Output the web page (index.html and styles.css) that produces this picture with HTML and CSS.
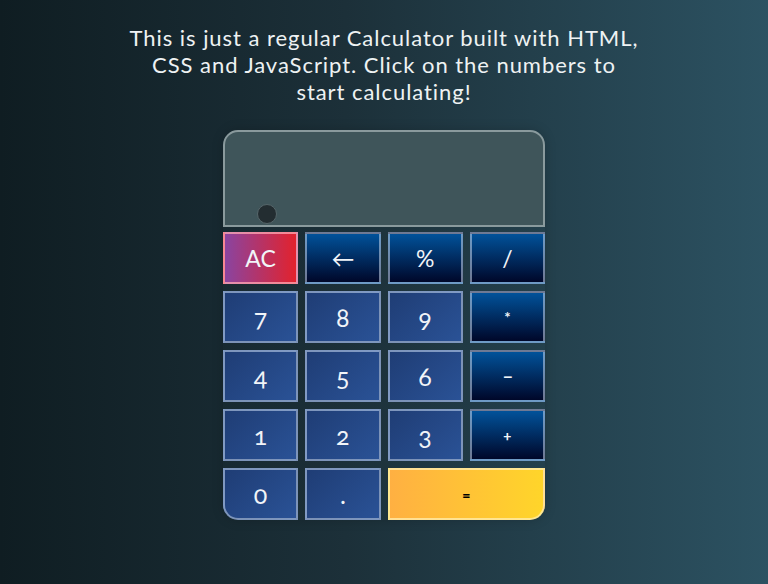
FILE: index.html
```
<!DOCTYPE html>
<html>
<head>
<meta charset="utf-8">
<link rel="stylesheet" href="styles.css">
</head>
<body>
<main class="page">
  <p class="intro">This is just a regular Calculator built with HTML, CSS and JavaScript. Click on the numbers to start calculating!</p>
  <div class="calc">
    <div class="display"><span class="dot"></span></div>
    <div class="keys">
      <button class="key clear">AC</button>
      <button class="key op">&larr;</button>
      <button class="key op">%</button>
      <button class="key op">/</button>
      <button class="key num">7</button>
      <button class="key num">8</button>
      <button class="key num">9</button>
      <button class="key op small">*</button>
      <button class="key num">4</button>
      <button class="key num">5</button>
      <button class="key num">6</button>
      <button class="key op small"><span class="wide">-</span></button>
      <button class="key num">1</button>
      <button class="key num">2</button>
      <button class="key num">3</button>
      <button class="key op small">+</button>
      <button class="key num zero">0</button>
      <button class="key num">.</button>
      <button class="key equals">=</button>
    </div>
  </div>
</main>
</body>
</html>
```
FILE: styles.css
```
html, body {
  margin: 0;
  height: 100%;
}
body {
  background: linear-gradient(90deg, #0f1d22 0%, #1c3039 45%, #2c5262 100%);
  font-family: Lato, "Open Sans", sans-serif;
  color: #eef2f3;
}
.page {
  display: flex;
  flex-direction: column;
  align-items: center;
  padding-top: 24px;
}
.intro {
  margin: 0;
  width: 516px;
  text-align: center;
  font-size: 22px;
  line-height: 27px;
  letter-spacing: 0.95px;
  font-variant-numeric: oldstyle-nums;
}
.calc {
  margin-top: 25px;
  width: 322px;
  box-shadow: 0 0 12px rgba(0, 0, 0, 0.18);
  border-radius: 15px;
}
.display {
  position: relative;
  height: 93px;
  background: #3f555a;
  border: 2px solid #8a9a9d;
  border-radius: 15px 15px 0 0;
}
.dot {
  position: absolute;
  left: 32px;
  top: 72px;
  width: 18px;
  height: 18px;
  border-radius: 50%;
  background: #232d31;
  border: 1px solid #56666a;
}
.keys {
  margin-top: 5px;
  display: grid;
  grid-template-columns: repeat(4, 1fr);
  grid-auto-rows: 52px;
  gap: 7px 7px;
}
.key {
  border: 2px solid rgba(200, 215, 235, 0.55);
  color: #f1f4f8;
  font-family: Lato, "Open Sans", sans-serif;
  font-size: 23px;
  font-variant-numeric: oldstyle-nums;
  padding: 0;
  margin: 0;
}
.num {
  background: linear-gradient(135deg, #1f3d75 0%, #2a5296 100%);
  font-size: 25px;
}
.op {
  background: linear-gradient(180deg, #01529a 0%, #000729 100%);
}
.small {
  font-size: 15px;
  font-weight: bold;
}
.wide {
  display: inline-block;
  transform: scaleX(2);
}
.clear {
  background: linear-gradient(90deg, #8a44a0 0%, #e2222d 100%);
  border-color: rgba(255, 170, 180, 0.75);
}
.zero {
  border-bottom-left-radius: 15px;
}
.equals {
  grid-column: span 2;
  background: linear-gradient(90deg, #ffb042 0%, #ffd52a 100%);
  border-color: rgba(255, 235, 170, 0.8);
  border-bottom-right-radius: 15px;
  color: #000;
  font-size: 15px;
  font-weight: 900;
}
```
